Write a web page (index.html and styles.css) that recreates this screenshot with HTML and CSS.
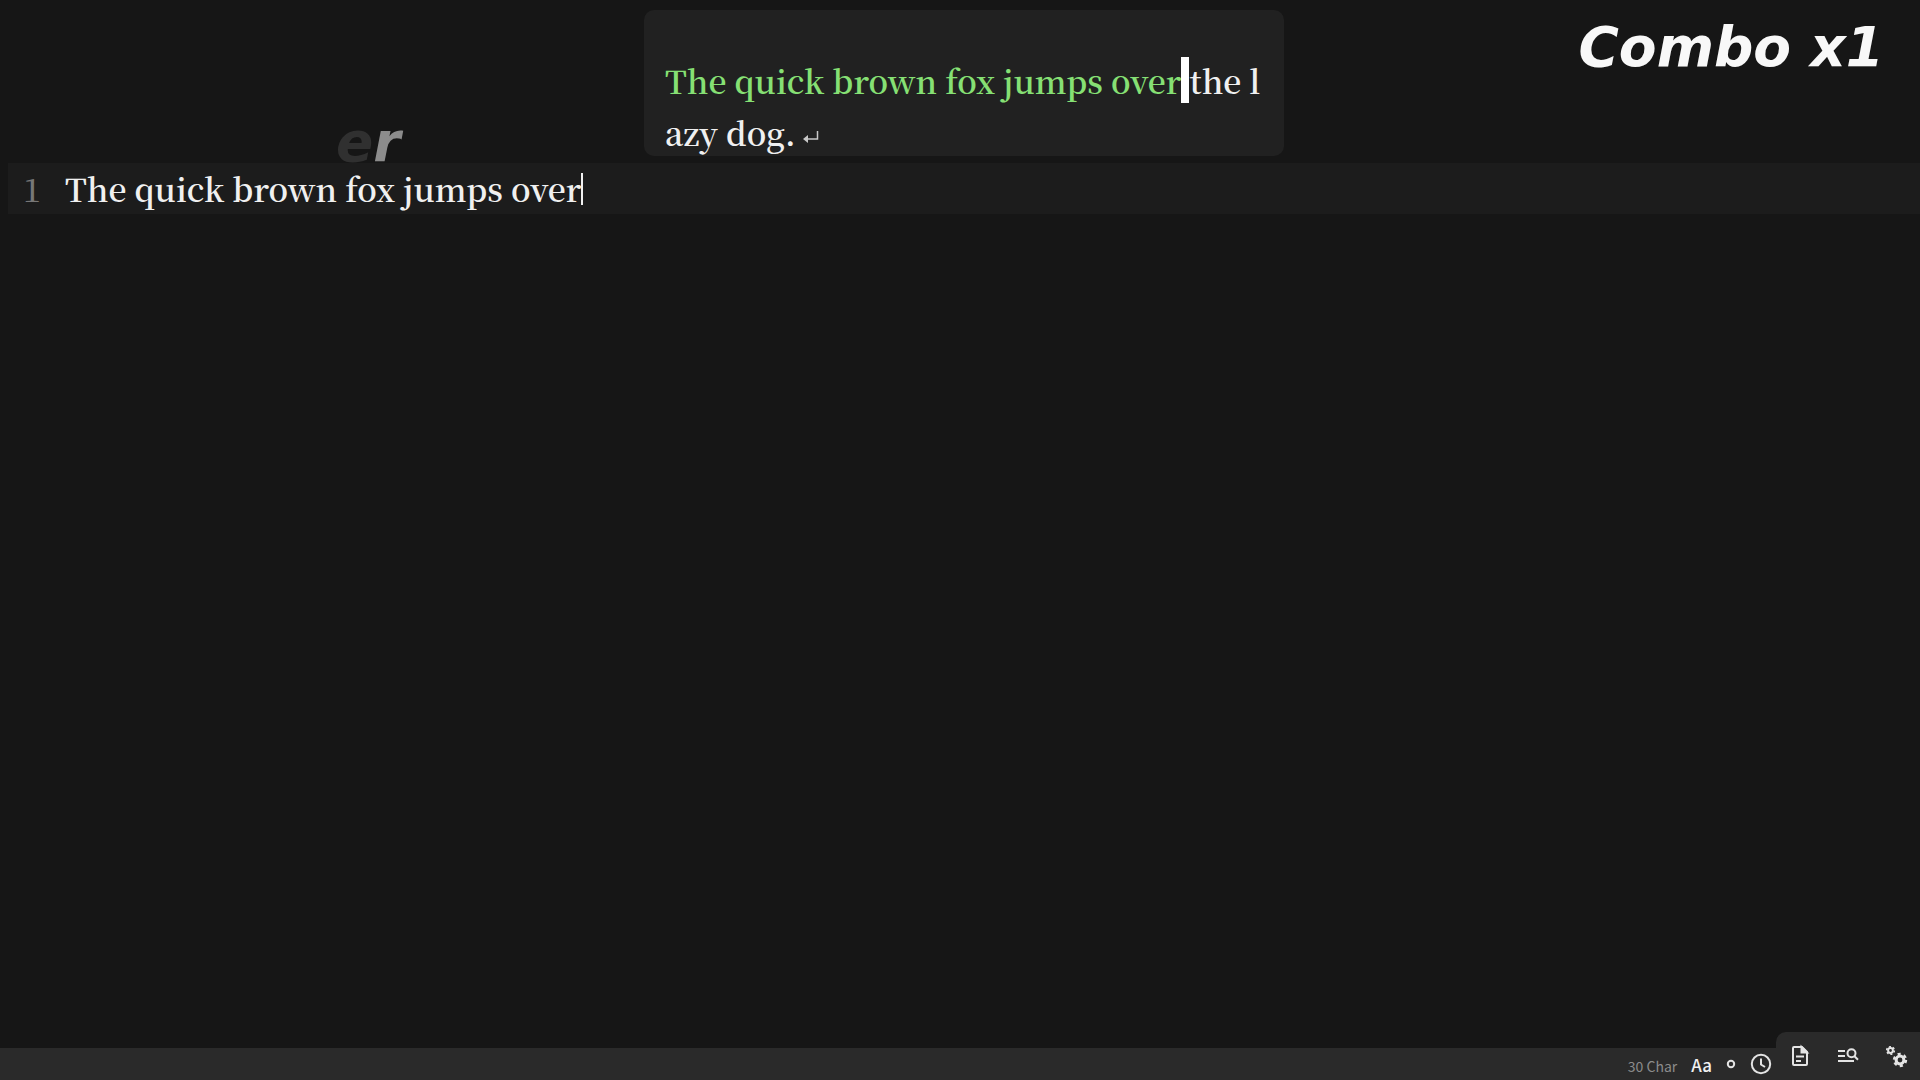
FILE: index.html
```html
<!DOCTYPE html>
<html lang="en">
  <head>
    <meta charset="UTF-8" />
    <meta name="viewport" content="width=device-width, initial-scale=1.0" />
    <title>Typing Practice</title>
    <link rel="stylesheet" href="styles.css">
  </head>
  <body>
    <header class="stage">
      <div class="target">
        <p class="line"><span class="done">The quick brown fox jumps over</span><span class="cursor"> </span>the l</p>
        <p class="line">azy dog.<svg class="enter" viewBox="0 0 16 12"><path d="M14.500 0v8H3" fill="none" stroke="currentColor" stroke-width="1.500" /><path d="M0 8l5-4v8z" fill="currentColor" /></svg></p>
      </div>
      <div class="combo">Combo x1</div>
      <!-- letters thrown off by the last keystrokes -->
      <div class="fly"><span class="fly-old">e</span><span class="fly-new">r</span></div>
    </header>

    <main class="editor">
      <div class="row">
        <label class="line-number" for="typed">1</label>
        <div class="field">
          <input id="typed" type="text" value="The quick brown fox jumps over" spellcheck="false" autocomplete="off" />
          <div class="mirror" aria-hidden="true"><span class="ghost"></span><span class="caret"></span></div>
        </div>
      </div>
    </main>

    <footer class="status">
      <div class="info">
        <span class="count">30 Char</span>
        <button class="case" title="Font">Aa</button>
        <button title="Marker"><svg viewBox="0 0 10 10" width="10" height="10"><circle cx="5" cy="5" r="3.200" /></svg></button>
        <button title="Timer"><svg viewBox="0 0 22 22" width="22" height="22"><circle cx="11" cy="11" r="9.200" /><path d="M11 5.500v6l4 2.500" /></svg></button>
      </div>
      <nav class="tools">
        <button title="Document">
          <svg viewBox="0 0 24 24" width="24" height="24">
            <path d="M14 3H6a1 1 0 0 0-1 1v16a1 1 0 0 0 1 1h12a1 1 0 0 0 1-1V8z" />
            <path d="M13.500 3v5.500H19zM8 12.500h8M8 17h5" />
            <path class="solid" d="M13 3v6h6z" />
          </svg>
        </button>
        <button title="Search">
          <svg viewBox="0 0 24 24" width="24" height="24">
            <path d="M2 7h7M2 12h7M2 17h16" />
            <circle cx="15.500" cy="9.300" r="4" />
            <path d="M18.500 12.300L22 15.800" />
          </svg>
        </button>
        <button title="Settings">
          <svg viewBox="0 0 24 24" width="24" height="24">
            <circle cx="6.500" cy="6.500" r="2.400" />
            <circle class="teeth-small" cx="6.500" cy="6.500" r="3.800" />
            <circle class="ring" cx="16" cy="16" r="3.900" />
            <circle class="teeth" cx="16" cy="16" r="6" />
          </svg>
        </button>
      </nav>
    </footer>

    <script>
      // Keep the custom caret at the end of the typed text
      const typed = document.querySelector("#typed");
      const ghost = document.querySelector(".ghost");

      const moveCaret = () => {
        ghost.textContent = typed.value;
      };

      typed.addEventListener("input", moveCaret);
      moveCaret();
    </script>
  </body>
</html>
```
FILE: styles.css
```css
* {
  margin: 0;
  padding: 0;
  box-sizing: border-box;
}

:root {
  --bg: #161616;
  --panel: #212121;
  --row: #1c1c1c;
  --bar: #2a2a2a;
  --text: #f0f0f0;
  --green: #86e074;
}

body {
  display: flex;
  flex-direction: column;
  min-height: 100vh;
  background: var(--bg);
  color: var(--text);
  font-family: "Noto Serif CJK SC", "Liberation Serif", serif;
  font-size: 32px;
  font-weight: 500;
}

button {
  border: 0;
  background: none;
  color: inherit;
  cursor: pointer;
}

.stage {
  position: relative;
  display: flex;
  justify-content: center;
  padding: 10px 0 7px 8px;
}

.target {
  width: 640px;
  height: 146px;
  padding: 44px 21px 0;
  border-radius: 10px;
  background: var(--panel);
}

.line,
.field {
  font-weight: 600;
}

.line {
  line-height: 52px;
  white-space: pre;
}

.done {
  color: var(--green);
}

.cursor {
  background: white;
}

.enter {
  width: 16px;
  height: 12px;
  margin-left: 7px;
  vertical-align: 3px;
  color: #c8c8c8;
}

.combo,
.fly {
  position: absolute;
  font: italic bold 55px "DejaVu Sans", sans-serif;
}

.combo {
  top: 15px;
  right: 36px;
  color: #f8f8f8;
}

.fly {
  top: 110px;
  left: 336px;
}

.fly-old {
  color: #303030;
}

.fly-new {
  color: #8c8c8c;
}

.editor {
  flex: 1;
  padding-left: 8px;
}

.row {
  display: flex;
  background: var(--row);
  line-height: 51px;
}

.line-number {
  width: 57px;
  padding-left: 15px;
  color: #777;
}

.field {
  display: grid;
  flex: 1;
}

.field input,
.mirror {
  grid-area: 1 / 1;
}

.field input {
  height: 51px;
  border: 0;
  outline: 0;
  background: none;
  color: inherit;
  caret-color: transparent;
  font: inherit;
}

.mirror {
  display: flex;
  align-items: center;
  pointer-events: none;
  white-space: pre;
}

.ghost {
  visibility: hidden;
}

.caret {
  width: 2px;
  height: 32px;
  background: var(--text);
}

.status {
  display: flex;
  justify-content: flex-end;
  align-items: flex-end;
  background: linear-gradient(var(--bg) 16px, var(--bar) 16px);
  font-family: "Noto Sans CJK SC", sans-serif;
}

.info {
  display: flex;
  align-items: center;
  gap: 14px;
  height: 32px;
  padding-right: 4px;
}

.info button {
  display: flex;
}

.count {
  padding-top: 3px;
  color: #8c8c8c;
  font-size: 14px;
  font-weight: 400;
}

.info .case {
  font: 500 17px "Noto Sans CJK SC", sans-serif;
}

.status svg {
  fill: none;
  stroke: #e4e4e4;
  stroke-width: 2;
}

.tools {
  display: flex;
  height: 48px;
  border-top-left-radius: 10px;
  background: var(--bar);
}

.tools button {
  display: flex;
  align-items: center;
  justify-content: center;
  width: 48px;
}

.status .solid {
  fill: #e4e4e4;
  stroke: none;
}

.status .ring {
  stroke-width: 3;
}

/* six teeth round each gear */
.status .teeth {
  stroke-width: 2.4;
  stroke-dasharray: 3.1 3.183;
}

.status .teeth-small {
  stroke-width: 1.6;
  stroke-dasharray: 2 1.979;
}
```
